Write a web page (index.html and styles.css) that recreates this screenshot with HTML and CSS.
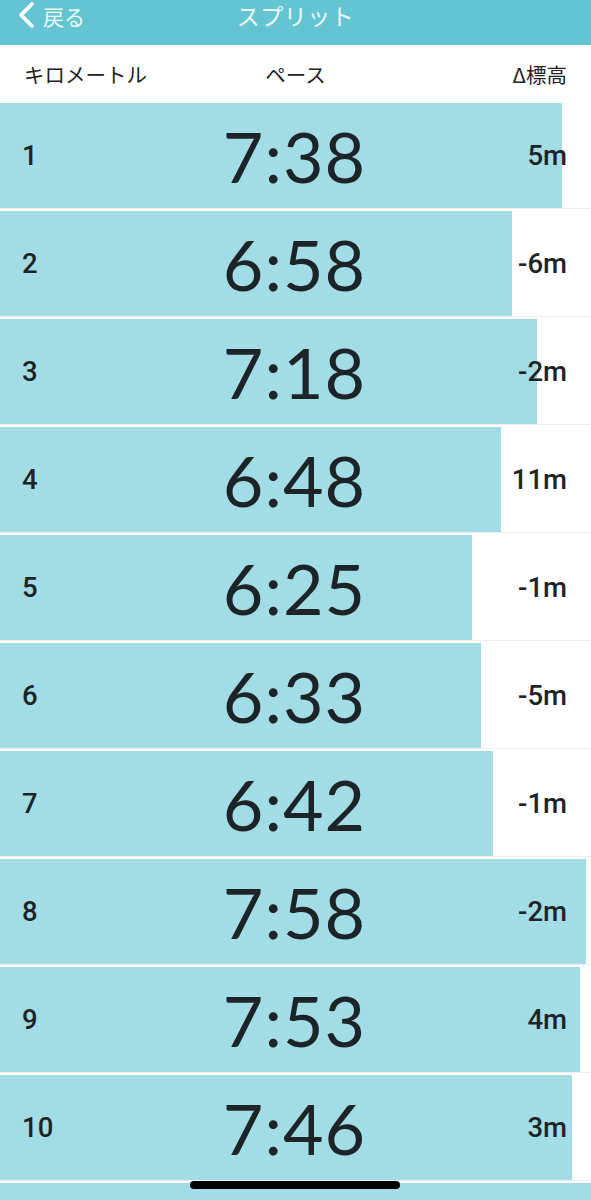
FILE: index.html
```html
<!DOCTYPE html>
<html lang="ja">
<head>
    <meta charset="UTF-8">
    <meta name="viewport" content="width=device-width, initial-scale=1.0">
    <title>スプリット</title>
    <link rel="stylesheet" href="styles.css">
</head>
<body>
    <header class="navbar">
        <a class="back" href="#">
            <svg class="back-icon" width="20" height="28" viewBox="0 0 20 28">
                <polyline points="16,3 5,14 16,25" fill="none" stroke="#fff" stroke-width="3.8" stroke-linecap="round" stroke-linejoin="round"/>
            </svg>
            <span>戻る</span>
        </a>
        <h1 class="title">スプリット</h1>
        <span></span>
    </header>

    <div class="columns">
        <span class="col-km">キロメートル</span>
        <span class="col-pace">ペース</span>
        <span class="col-elev">Δ標高</span>
    </div>

    <ul class="splits">
        <li class="split">
            <div class="bar" style="width: 562px"></div>
            <div class="split-data"><span class="km">1</span><span class="pace">7:38</span><span class="elev">5m</span></div>
        </li>
        <li class="split">
            <div class="bar" style="width: 512px"></div>
            <div class="split-data"><span class="km">2</span><span class="pace">6:58</span><span class="elev">-6m</span></div>
        </li>
        <li class="split">
            <div class="bar" style="width: 537px"></div>
            <div class="split-data"><span class="km">3</span><span class="pace">7:18</span><span class="elev">-2m</span></div>
        </li>
        <li class="split">
            <div class="bar" style="width: 501px"></div>
            <div class="split-data"><span class="km">4</span><span class="pace">6:48</span><span class="elev">11m</span></div>
        </li>
        <li class="split">
            <div class="bar" style="width: 472px"></div>
            <div class="split-data"><span class="km">5</span><span class="pace">6:25</span><span class="elev">-1m</span></div>
        </li>
        <li class="split">
            <div class="bar" style="width: 481px"></div>
            <div class="split-data"><span class="km">6</span><span class="pace">6:33</span><span class="elev">-5m</span></div>
        </li>
        <li class="split">
            <div class="bar" style="width: 493px"></div>
            <div class="split-data"><span class="km">7</span><span class="pace">6:42</span><span class="elev">-1m</span></div>
        </li>
        <li class="split">
            <div class="bar" style="width: 586px"></div>
            <div class="split-data"><span class="km">8</span><span class="pace">7:58</span><span class="elev">-2m</span></div>
        </li>
        <li class="split">
            <div class="bar" style="width: 580px"></div>
            <div class="split-data"><span class="km">9</span><span class="pace">7:53</span><span class="elev">4m</span></div>
        </li>
        <li class="split">
            <div class="bar" style="width: 572px"></div>
            <div class="split-data"><span class="km">10</span><span class="pace">7:46</span><span class="elev">3m</span></div>
        </li>
        <!-- last partial split, only its top edge is on screen -->
        <li class="split">
            <div class="bar" style="width: 591px"></div>
        </li>
    </ul>

    <div class="home-indicator"></div>
</body>
</html>
```

FILE: styles.css
```css
body {
    margin: 0;
    background-color: #fff;
    color: #1d2427;
    font-family: "Noto Sans CJK JP", "Noto Sans", sans-serif;
}

.navbar {
    display: grid;
    grid-template-columns: 1fr auto 1fr;
    align-items: start;
    height: 45px;
    padding-top: 2px;
    box-sizing: border-box;
    background-color: #64c4d2;
    color: #fff;
}

.back {
    display: flex;
    align-items: center;
    gap: 7px;
    padding-left: 16px;
    color: #eefafc;
    text-decoration: none;
    font-size: 21px;
    line-height: 26px;
}

.back-icon {
    display: block;
    margin-top: -1px;
}

.title {
    margin: 0;
    font-size: 23px;
    font-weight: 400;
    line-height: 26px;
    letter-spacing: 0.5px;
    color: #eefafc;
}

.columns {
    display: grid;
    grid-template-columns: 1fr auto 1fr;
    align-items: center;
    height: 58px;
    padding: 0 24px 0 24px;
    font-size: 20.5px;
    color: #222;
}

.col-elev {
    text-align: right;
}

.splits {
    list-style: none;
    margin: 0;
    padding: 0;
}

.split {
    display: grid;
    height: 105px;
    margin-bottom: 2px;
    border-bottom: 1px solid #efefef;
}

.bar,
.split-data {
    grid-area: 1 / 1;
}

.bar {
    height: 100%;
    background-color: #a2dde6;
}

.split-data {
    display: grid;
    grid-template-columns: 1fr auto 1fr;
    align-items: center;
    padding: 0 24px 0 22px;
    font-family: "Lato", "Roboto", sans-serif;
}

.km,
.elev {
    font-family: "Roboto", "Lato", sans-serif;
    font-size: 27.5px;
    font-weight: 500;
}

.elev {
    text-align: right;
}

.pace {
    font-size: 70px;
    font-weight: 400;
    line-height: 1;
    letter-spacing: 1px;
}

.home-indicator {
    position: fixed;
    left: 190px;
    top: 1181px;
    width: 210px;
    height: 8px;
    border-radius: 4px;
    background-color: #000;
}
```
